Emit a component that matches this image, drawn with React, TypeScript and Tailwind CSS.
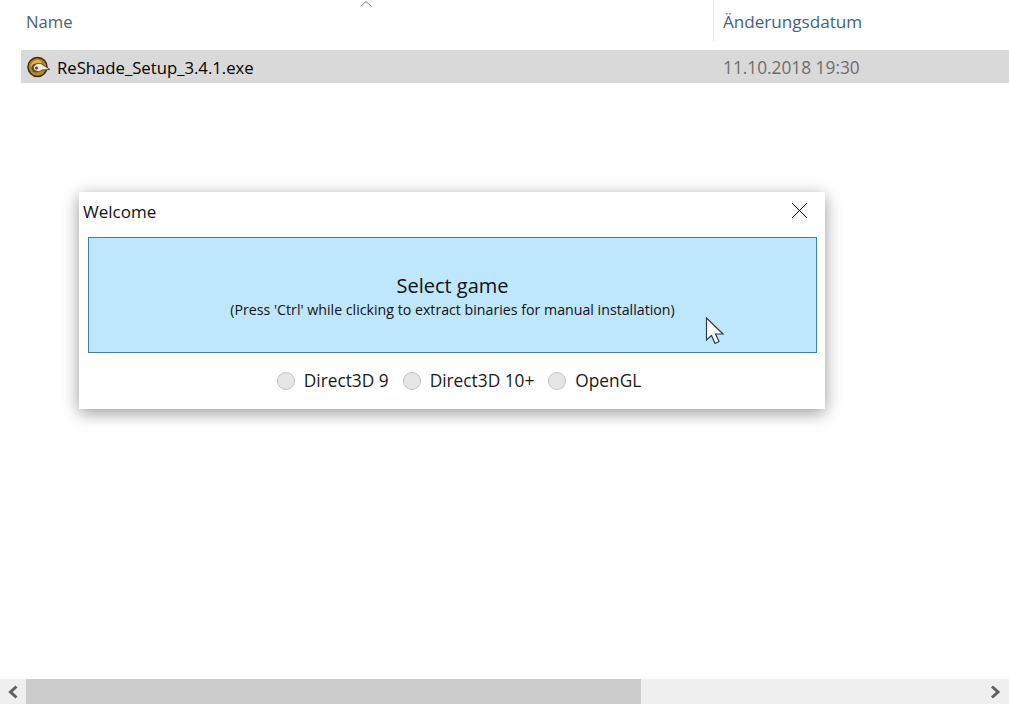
import React from 'react';
import { X } from 'lucide-react';

const font = "font-['Open_Sans','Noto_Sans',sans-serif]";

const Radio = ({ label }: { label: string }) => (
  <label className="flex items-center gap-[9px]">
    <span className="w-[18px] h-[18px] rounded-full bg-[#e6e6e6] border border-[#c4c4c4]" />
    <span className="text-[17.3px] leading-[22px] text-[#1a1a1a]">{label}</span>
  </label>
);

const ReShadeIcon = () => (
  <svg width="24" height="24" viewBox="0 0 24 24" className="shrink-0">
    <circle cx="10.5" cy="12" r="9.5" fill="#b8861f" stroke="#3d2a0c" strokeWidth="1.5" />
    <path d="M4 12 A6.5 6.5 0 0 1 15 7 L11 9 Z" fill="#e2b44a" />
    <circle cx="9" cy="13" r="4.5" fill="#6b4710" />
    <path d="M6 13 C8 8 13 7 16 10 L23 14.5 L15 15 C12 17.5 8 17 6 13Z" fill="#efe9da" stroke="#3a3a3a" strokeWidth="0.8" />
    <circle cx="9.5" cy="13" r="1.5" fill="#5c3d0d" />
  </svg>
);

const Cursor = () => (
  <svg width="20" height="28" viewBox="0 0 20 28" className="absolute left-[705px] top-[317px]">
    <path d="M1.5 1 L1.5 23 L6.5 18.5 L10 26.5 L14 24.5 L10.5 17 L18 17 Z" fill="#fff" stroke="#2b3a4a" strokeWidth="1.2" strokeLinejoin="miter" />
  </svg>
);

const ScrollArrow = ({ dir }: { dir: 'left' | 'right' }) => (
  <svg width="12" height="14" viewBox="0 0 12 14">
    <path d={dir === 'left' ? 'M9.5 1.5 L3.5 7 L9.5 12.5' : 'M3 1.5 L9 7 L3 12.5'} fill="none" stroke="#606060" strokeWidth="3" />
  </svg>
);

export default function App() {
  return (
    <div className={`relative w-[1009px] h-[704px] overflow-hidden bg-white flex flex-col ${font}`}>
      {/* explorer column header */}
      <div className="h-[41px] flex text-[#4c607a]">
        <div className="w-[714px] pl-[26px] pt-[9px] text-[16.7px] border-r border-[#e5e5e5] relative">
          Name
          <svg width="12" height="6" viewBox="0 0 12 6" className="absolute left-[360px] top-[1px]">
            <path d="M0.5 5.5 L6 0.5 L11.5 5.5" fill="none" stroke="#7a7a7a" strokeWidth="1" />
          </svg>
        </div>
        <div className="pl-[9px] pt-[9px] text-[17.1px] text-[#3f5f88]">Änderungsdatum</div>
      </div>

      {/* selected file row */}
      <div className="mt-[9px] ml-[21px] h-[33px] pt-[2px] flex items-center bg-[#d9d9d9]">
        <div className="w-[702px] flex items-center gap-[6px] pl-[6px]">
          <ReShadeIcon />
          <span className="text-[16.7px] text-black">ReShade_Setup_3.4.1.exe</span>
        </div>
        <span className="text-[17.3px] text-[#6d6d6d]">11.10.2018 19:30</span>
      </div>

      {/* installer window */}
      <div className="mt-[109px] ml-[79px] w-[746px] h-[217px] bg-white flex flex-col shadow-[0_4px_16px_rgba(0,0,0,0.4)]">
        <div className="h-[45px] flex items-start justify-between pl-[4px] pr-[11px]">
          <span className="mt-[8px] text-[17px] leading-[24px] text-[#111]">Welcome</span>
          <X size={29} strokeWidth={0.8} className="mt-[4px] text-black" />
        </div>
        <div className="mx-[9px] w-[729px] h-[116px] pt-[2px] bg-[#bee6fd] border border-[#3c7fb1] flex flex-col items-center justify-center">
          <span className="text-[20px] leading-[26px] text-[#111]">Select game</span>
          <span className="mt-[2px] text-[14.2px] leading-[18px] text-[#111]">(Press 'Ctrl' while clicking to extract binaries for manual installation)</span>
        </div>
        <div className="flex-1 flex items-center justify-center gap-[14px] pl-[14px] pb-[1px]">
          <Radio label="Direct3D 9" />
          <Radio label="Direct3D 10+" />
          <Radio label="OpenGL" />
        </div>
      </div>

      <Cursor />

      {/* horizontal scrollbar */}
      <div className="mt-auto h-[25px] flex items-center bg-[#efefef]">
        <div className="w-[26px] flex justify-center"><ScrollArrow dir="left" /></div>
        <div className="w-[615px] h-full bg-[#cbcbcb]" />
        <div className="flex-1 flex justify-end pr-[8px]"><ScrollArrow dir="right" /></div>
      </div>
    </div>
  );
}
